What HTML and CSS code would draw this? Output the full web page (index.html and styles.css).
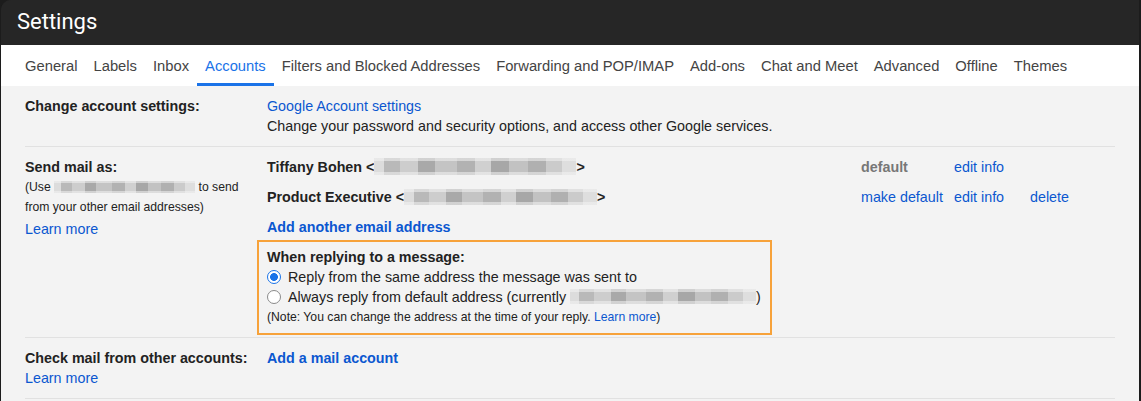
FILE: index.html
```html
<!DOCTYPE html>
<html lang="en">
<head>
<meta charset="utf-8">
<title>Settings</title>
<link rel="stylesheet" href="styles.css">
</head>
<body>
<div class="window">
  <header class="titlebar">Settings</header>
  <nav class="tabbar">
    <div class="tabs">
      <a class="tab">General</a>
      <a class="tab">Labels</a>
      <a class="tab">Inbox</a>
      <a class="tab active">Accounts</a>
      <a class="tab">Filters and Blocked Addresses</a>
      <a class="tab">Forwarding and POP/IMAP</a>
      <a class="tab">Add-ons</a>
      <a class="tab">Chat and Meet</a>
      <a class="tab">Advanced</a>
      <a class="tab">Offline</a>
      <a class="tab">Themes</a>
    </div>
  </nav>
  <main class="content">
    <section class="row">
      <div class="label"><span class="strong">Change account settings:</span></div>
      <div class="value">
        <div><a class="link">Google Account settings</a></div>
        <div>Change your password and security options, and access other Google services.</div>
      </div>
    </section>

    <section class="row row-send">
      <div class="label">
        <div class="strong">Send mail as:</div>
        <div class="small">(Use <span class="blur blur-use"></span> to send</div>
        <div class="small">from your other email addresses)</div>
        <div class="learn"><a class="link">Learn more</a></div>
      </div>
      <div class="value">
        <div class="sendas">
          <div class="strong">Tiffany Bohen &lt;<span class="blur blur-a"></span>&gt;</div>
          <div class="strong muted">default</div>
          <div><a class="link">edit info</a></div>
          <div></div>
        </div>
        <div class="sendas">
          <div class="strong">Product Executive &lt;<span class="blur blur-b"></span>&gt;</div>
          <div><a class="link">make default</a></div>
          <div><a class="link">edit info</a></div>
          <div><a class="link">delete</a></div>
        </div>
        <div class="sendas-add"><a class="link strong">Add another email address</a></div>
        <div class="reply-box">
          <div class="strong">When replying to a message:</div>
          <div class="radio-row"><span class="radio checked"></span><span>Reply from the same address the message was sent to</span></div>
          <div class="radio-row"><span class="radio"></span><span>Always reply from default address (currently <span class="blur blur-c"></span>)</span></div>
          <div class="small">(Note: You can change the address at the time of your reply. <a class="link">Learn more</a>)</div>
        </div>
      </div>
    </section>

    <section class="row">
      <div class="label">
        <div class="strong">Check mail from other accounts:</div>
        <div><a class="link">Learn more</a></div>
      </div>
      <div class="value">
        <div><a class="link strong">Add a mail account</a></div>
      </div>
    </section>
  </main>
</div>
</body>
</html>
```

FILE: styles.css
```css
* { box-sizing: border-box; }
html, body { margin: 0; padding: 0; }
body {
  background: #1c1c1c;
  font-family: "Liberation Sans", Arial, sans-serif;
  font-size: 14.3px;
  color: #222;
  height: 401px;
  overflow: hidden;
}
.window {
  margin: 0 2px 0 1px;
  background: #262626;
  border-top-left-radius: 10px;
}
.titlebar {
  height: 45px;
  line-height: 44px;
  padding-left: 16px;
  color: #fff;
  font-family: Roboto, "Open Sans", sans-serif;
  font-size: 22px;
  background: #262626;
  border-top-left-radius: 10px;
}
.tabbar {
  background: #fff;
  height: 41px;
  padding-left: 16px;
}
.tabs {
  display: flex;
  height: 41px;
}
.tab {
  padding: 4px 8px 0;
  line-height: 34px;
  border-bottom: 3px solid transparent;
  color: #444;
  font-family: "Liberation Sans", Arial, sans-serif;
  font-size: 14.75px;
  white-space: nowrap;
}
.tab.active {
  color: #1a73e8;
  border-bottom-color: #1a73e8;
}
.content {
  background: #f3f3f3;
  padding: 0 24px;
  height: 315px;
}
.row {
  display: grid;
  grid-template-columns: 242px 1fr;
  padding: 10px 0;
  line-height: 20px;
  border-bottom: 1px solid #e1e1e1;
}
.row-send { padding-bottom: 2px; }
.learn { margin-top: 2px; }
.strong { font-weight: bold; }
.muted { color: #777; }
.small { font-size: 12.2px; }
.link { color: #0b57d0; text-decoration: none; }
.sendas {
  display: grid;
  grid-template-columns: 594px 93px 76px 1fr;
  margin-bottom: 10px;
  white-space: nowrap;
}
.sendas-add { margin-bottom: 3px; }
.reply-box {
  width: 515px;
  margin-left: -10px;
  border: 2px solid #f7a23a;
  padding: 5px 8px 6px;
  white-space: nowrap;
}
.radio-row {
  display: flex;
  align-items: center;
  gap: 7px;
}
.radio {
  width: 14px;
  height: 14px;
  border-radius: 50%;
  border: 1px solid #8a8a8a;
  background: #fff;
  flex: none;
}
.radio.checked {
  border-color: #1a73e8;
  background: radial-gradient(circle, #1a73e8 0 3.6px, #fff 4.2px);
}
.blur {
  display: inline-block;
  vertical-align: middle;
  background:
    linear-gradient(180deg, rgba(243,243,243,0.55) 0 20%, rgba(243,243,243,0) 20% 80%, rgba(243,243,243,0.55) 80%),
    linear-gradient(90deg, #dcdcdc 0 5%, #b9b9b9 5% 13%, #cdcdcd 13% 22%, #a9a9a9 22% 30%, #c4c4c4 30% 41%, #b2b2b2 41% 50%, #d0d0d0 50% 58%, #a7a7a7 58% 67%, #c2c2c2 67% 76%, #b0b0b0 76% 85%, #cbcbcb 85% 93%, #dedede 93%);
}
.blur-use { width: 141px; height: 12px; margin-top: -2px; }
.blur-a { width: 202px; height: 17px; margin-top: -3px; }
.blur-b { width: 193px; height: 16px; margin-top: -3px; }
.blur-c { width: 186px; height: 15px; margin-top: -3px; }
```
